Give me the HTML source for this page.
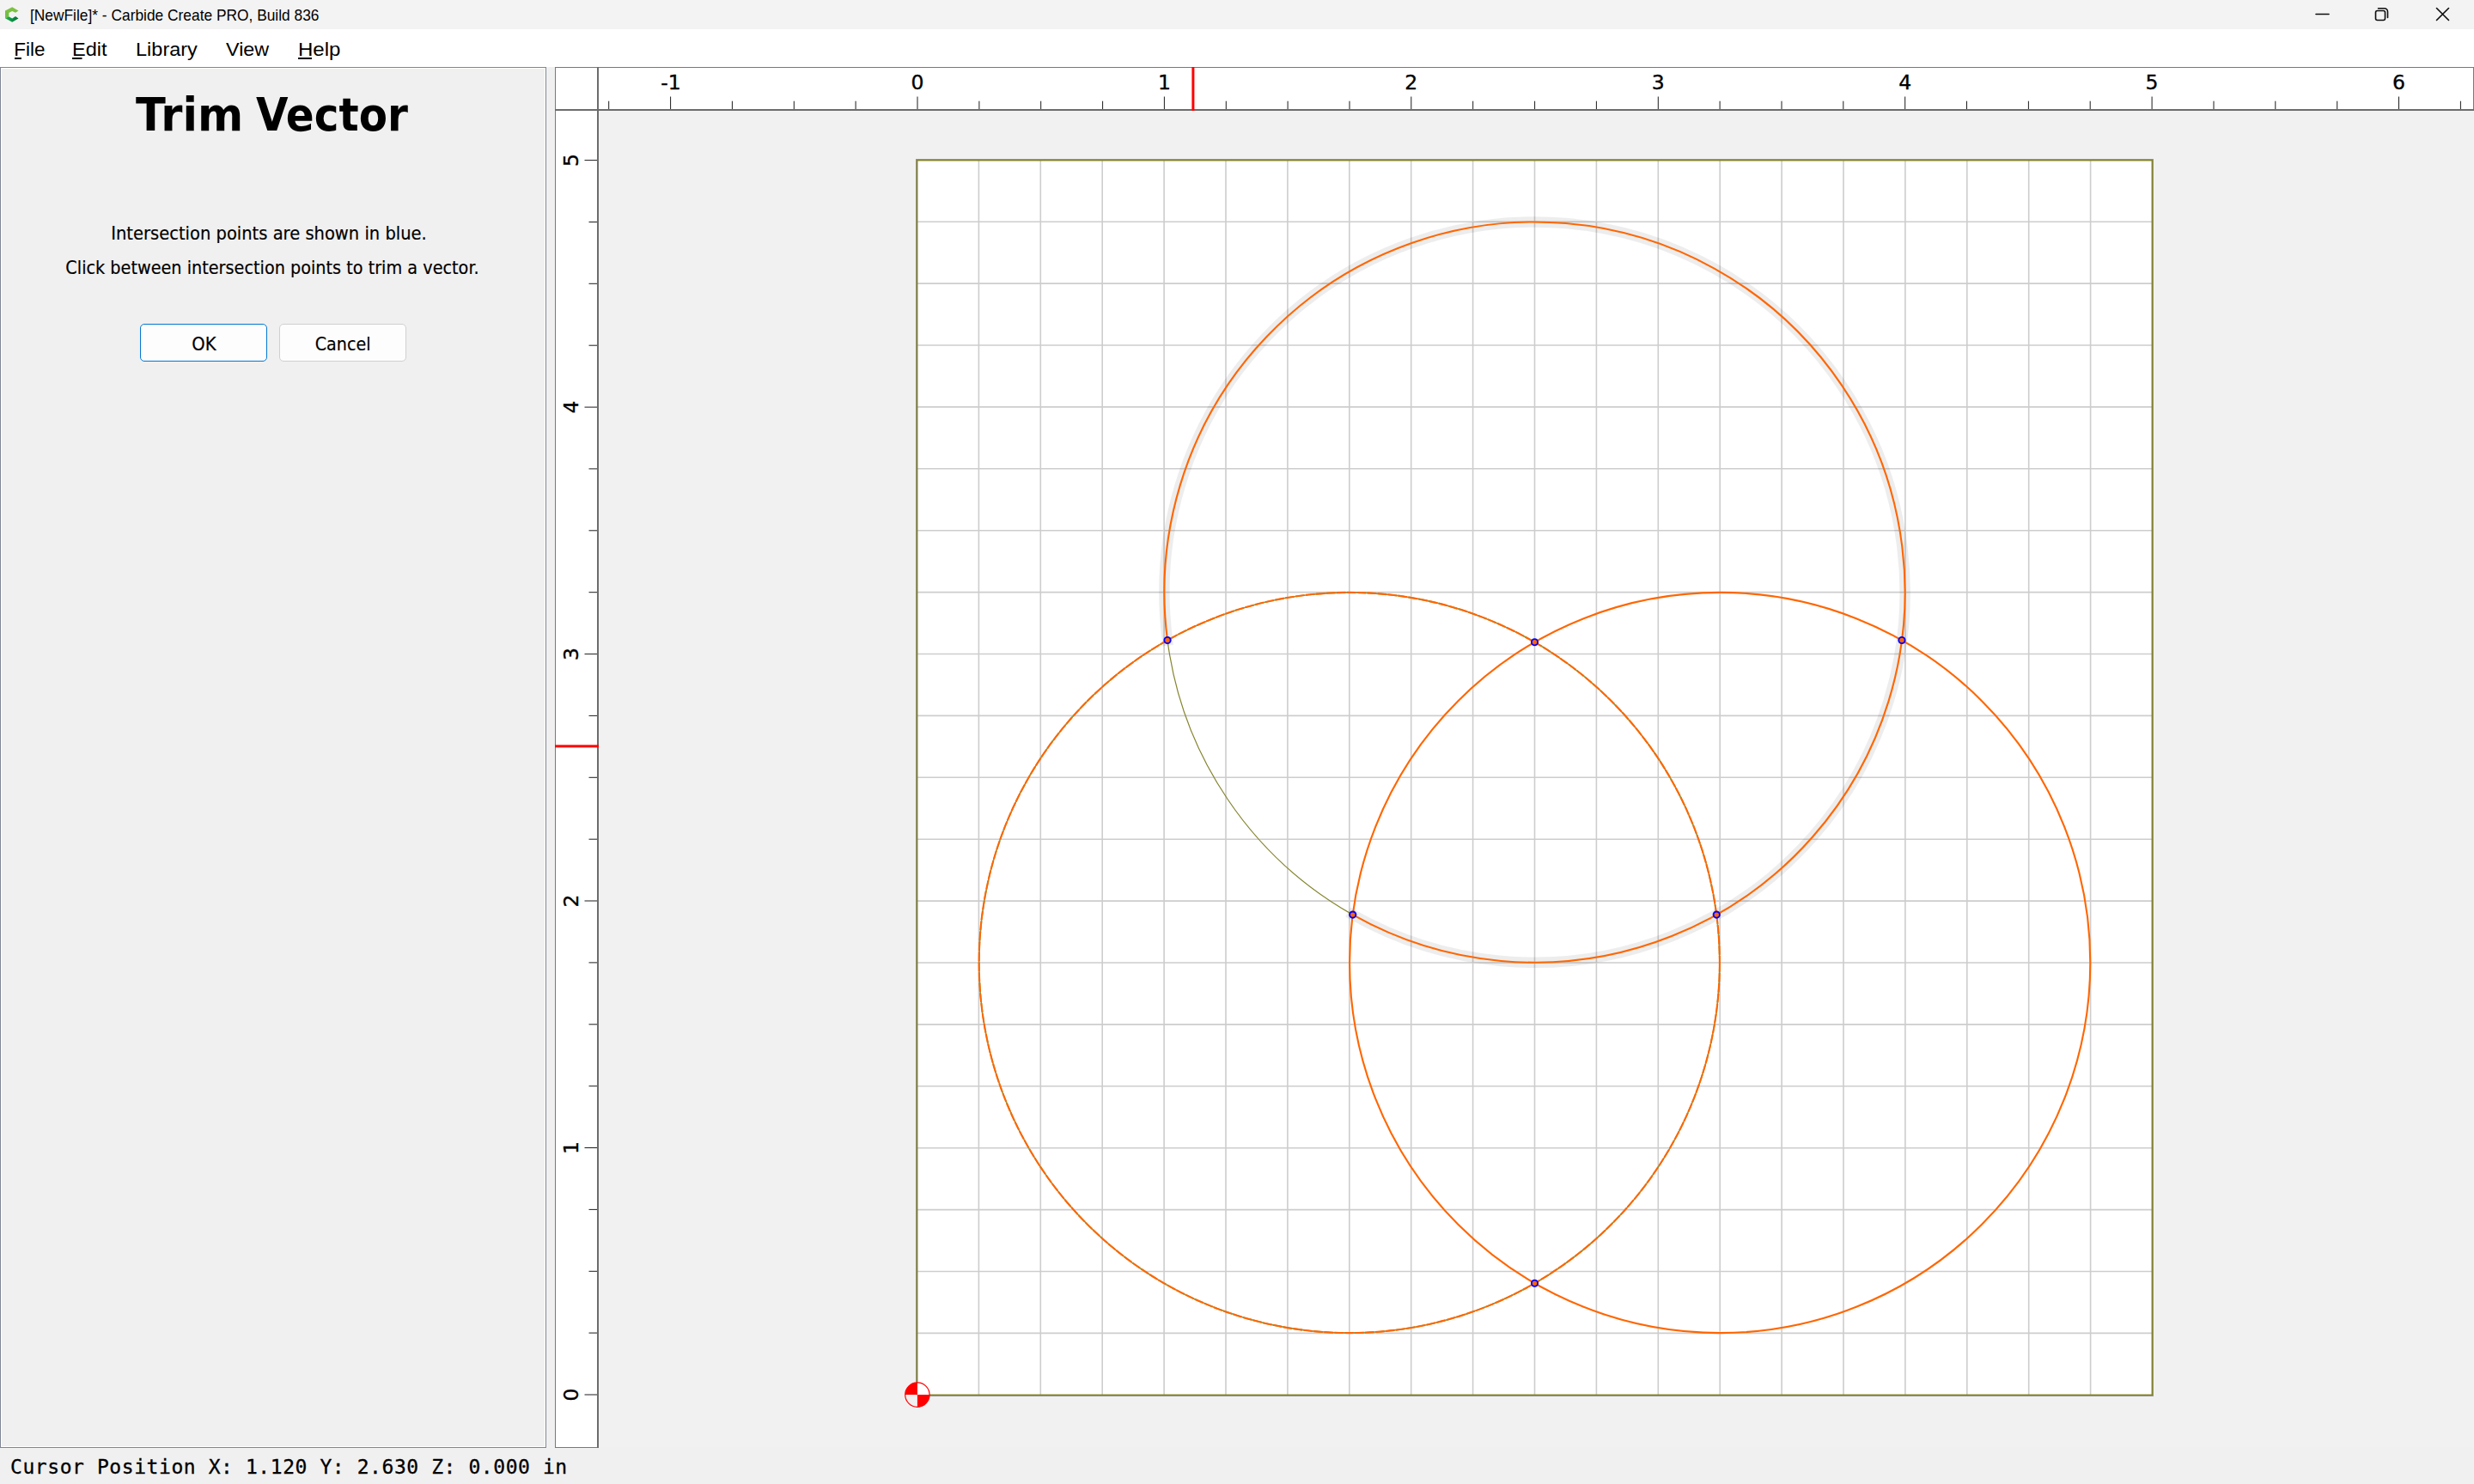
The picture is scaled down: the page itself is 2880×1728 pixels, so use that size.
<!DOCTYPE html>
<html lang="en"><head><meta charset="utf-8"><title>[NewFile]* - Carbide Create PRO, Build 836</title>
<style>
html,body{margin:0;padding:0;}
body{width:2880px;height:1728px;overflow:hidden;background:#f0f0f0;position:relative;font-family:"Liberation Sans",sans-serif;color:#000;}
.abs{position:absolute;white-space:nowrap;}
#titlebar{position:absolute;left:0;top:0;width:2880px;height:34px;background:#f3f3f3;}
#titletext{left:35px;top:4.7px;font-size:19px;line-height:26px;transform-origin:0 0;transform:scaleX(0.913);color:#000;}
#menubar{position:absolute;left:0;top:34px;width:2880px;height:44px;background:#fff;}
.mi{top:5.5px;font-size:22.5px;line-height:36px;transform-origin:0 0;}
.mi u{text-decoration:none;}
.mi.m::after{content:"";position:absolute;left:0.3px;top:27.8px;width:var(--w);height:1.7px;background:#000;}
#panel{position:absolute;left:0;top:78px;width:634px;height:1606px;border:1px solid #7e8594;background:#f0f0f0;box-shadow:inset 0 0 0 1px #fff;}
.tah{font-family:"DejaVu Sans",sans-serif;transform-origin:50% 50%;}
#ptitle{left:0;width:634px;top:23.3px;height:64px;font-size:53.33px;font-weight:bold;line-height:64px;}
#ptitle span{position:absolute;top:0;transform-origin:0 50%;}
.pline{-webkit-text-stroke:0.2px #000;left:0;width:634px;text-align:center;font-size:21.33px;line-height:30px;transform:scaleX(0.905);}
.btn{position:absolute;top:377px;width:146px;height:42px;border:1px solid #d0d0d0;border-radius:5px;background:#fdfdfd;text-align:center;}
.btn span{-webkit-text-stroke:0.2px #000;display:inline-block;position:relative;top:1.5px;font-family:"DejaVu Sans",sans-serif;font-size:21.33px;line-height:42px;transform:scaleX(0.92);}
#status{left:12px;top:1690.3px;-webkit-text-stroke:0.3px #000;font-family:"DejaVu Sans Mono","Liberation Mono",monospace;font-size:23px;letter-spacing:0.57px;line-height:36px;}
#cv{position:absolute;left:0;top:0;}
</style></head><body>

<div id="titlebar">
<svg class="abs" style="left:0;top:0" width="34" height="34" viewBox="0 0 34 34"><defs><linearGradient id="g1" x1="0" y1="0" x2="1" y2="0"><stop offset="0" stop-color="#2fae4c"/><stop offset="0.45" stop-color="#0a9648"/><stop offset="1" stop-color="#04702f"/></linearGradient></defs><polygon points="14.2,8.2 21.5,12.5 18,14.8 14.2,12.9 10.2,15.1 10.2,19.2 6,21.2 6,12.6" fill="#7bc142"/><polygon points="6,21.2 10.2,19.2 14.2,21.4 18,19.1 21.5,21.4 14.2,25.8" fill="url(#g1)"/><polygon points="6,12.6 10.2,15.1 10.2,19.2 6,21.2" fill="#72bf44"/></svg>
<div class="abs" id="titletext">[NewFile]* - Carbide Create PRO, Build 836</div>
<svg class="abs" style="left:2680px;top:0" width="200" height="34" viewBox="2680 0 200 34" fill="none" stroke="#0c0c0c" stroke-width="1.6" stroke-linecap="round"><path d="M2696 16.5H2711"/><rect x="2765.5" y="12.5" width="11" height="11" rx="2"/><path d="M2768.5 9.7H2775.5a4 4 0 0 1 4 4V20.5"/><path d="M2836.5 9.5L2850.5 23.5M2850.5 9.5L2836.5 23.5"/></svg>
</div>
<div id="menubar">
<div class="abs mi m" style="--w:8.8px;left:16.3px;transform:scaleX(1.0)"><u>F</u>ile</div>
<div class="abs mi m" style="--w:11.2px;left:84.4px;transform:scaleX(1.047)"><u>E</u>dit</div>
<div class="abs mi" style="left:157.5px;transform:scaleX(1.045)">Library</div>
<div class="abs mi" style="left:262.8px;transform:scaleX(1.037)">View</div>
<div class="abs mi m" style="--w:14.3px;left:346.5px;transform:scaleX(1.069)"><u>H</u>elp</div>
</div>
<div id="panel">
<div class="abs tah" id="ptitle"><span style="left:157px;transform:scaleX(0.958)">Trim</span> <span style="left:296.5px;transform:scaleX(0.909)">Vector</span></div>
<div class="abs tah pline" style="top:177.5px;left:-5.3px;transform:scaleX(0.915)">Intersection points are shown in blue.</div>
<div class="abs tah pline" style="top:217.5px;left:-0.8px;transform:scaleX(0.9025)">Click between intersection points to trim a vector.</div>
</div>
<div class="btn" style="left:163px;border-color:#0078d4"><span>OK</span></div>
<div class="btn" style="left:325px"><span style="transform:scaleX(0.897)">Cancel</span></div>
<div class="abs" id="status">Cursor Position X: 1.120 Y: 2.630 Z: 0.000 in</div>
<svg id="cv" width="2880" height="1728" viewBox="0 0 2880 1728" font-family="DejaVu Sans, sans-serif" font-size="23.5">
<rect x="697" y="129" width="2183" height="1556.6" fill="#f1f1f1"/>
<rect x="1066.5" y="185.5" width="1440" height="1440" fill="none" stroke="#9a9aa2" stroke-width="1"/>
<rect x="1067.5" y="186.3" width="1438.0" height="1438.0" fill="#fff"/>
<path d="M1139.4 186.3V1624.3M1067.5 1552.4H2505.5M1211.3 186.3V1624.3M1067.5 1480.5H2505.5M1283.2 186.3V1624.3M1067.5 1408.6H2505.5M1355.1 186.3V1624.3M1067.5 1336.7H2505.5M1427.0 186.3V1624.3M1067.5 1264.8H2505.5M1498.9 186.3V1624.3M1067.5 1192.9H2505.5M1570.8 186.3V1624.3M1067.5 1121.0H2505.5M1642.7 186.3V1624.3M1067.5 1049.1H2505.5M1714.6 186.3V1624.3M1067.5 977.2H2505.5M1786.5 186.3V1624.3M1067.5 905.3H2505.5M1858.4 186.3V1624.3M1067.5 833.4H2505.5M1930.3 186.3V1624.3M1067.5 761.5H2505.5M2002.2 186.3V1624.3M1067.5 689.6H2505.5M2074.1 186.3V1624.3M1067.5 617.7H2505.5M2146.0 186.3V1624.3M1067.5 545.8H2505.5M2217.9 186.3V1624.3M1067.5 473.9H2505.5M2289.8 186.3V1624.3M1067.5 402.0H2505.5M2361.7 186.3V1624.3M1067.5 330.1H2505.5M2433.6 186.3V1624.3M1067.5 258.2H2505.5" stroke="#cdcdcd" stroke-width="1.6" fill="none"/>
<rect x="1067.6" y="186.6" width="1437.8" height="1437.8" fill="none" stroke="#83832a" stroke-width="1.7"/>
<path d="M1359.04 745.49A431.10 431.10 0 1 1 1574.74 1065.11" fill="none" stroke="#000" stroke-opacity="0.07" stroke-width="12.5" stroke-linecap="square"/>
<path d="M1359.04 745.49A431.10 431.10 0 0 0 1574.74 1065.11" fill="none" stroke="#85852f" stroke-width="1.2"/>
<circle cx="1570.80" cy="1121.00" r="431.10" fill="none" stroke="#8a9a40" stroke-width="1.6"/>
<circle cx="1570.80" cy="1121.00" r="431.10" fill="none" stroke="#ff6600" stroke-width="2.1" stroke-dasharray="10.6 1.4"/>
<circle cx="2002.20" cy="1121.00" r="431.10" fill="none" stroke="#ff6600" stroke-width="2.1"/>
<path d="M1359.04 745.49A431.10 431.10 0 1 1 1574.74 1065.11" fill="none" stroke="#ff6600" stroke-width="2.1"/>
<circle cx="1359.04" cy="745.49" r="3.65" fill="#ff6600" stroke="#0000ff" stroke-width="1.9"/>
<circle cx="1998.26" cy="1065.11" r="3.65" fill="#ff6600" stroke="#0000ff" stroke-width="1.9"/>
<circle cx="1574.74" cy="1065.11" r="3.65" fill="#ff6600" stroke="#0000ff" stroke-width="1.9"/>
<circle cx="2213.96" cy="745.49" r="3.65" fill="#ff6600" stroke="#0000ff" stroke-width="1.9"/>
<circle cx="1786.50" cy="1494.26" r="3.65" fill="#ff6600" stroke="#0000ff" stroke-width="1.9"/>
<circle cx="1786.50" cy="747.74" r="3.65" fill="#ff6600" stroke="#0000ff" stroke-width="1.9"/>
<path d="M1067.9 1624.1V1609.8999999999999A14.2 14.2 0 0 1 1082.1000000000001 1624.1Z" fill="#fff"/>
<path d="M1067.9 1624.1V1638.3A14.2 14.2 0 0 1 1053.7 1624.1Z" fill="#f1f1f1"/>
<path d="M1067.9 1624.1V1609.8999999999999A14.2 14.2 0 0 0 1053.7 1624.1ZM1067.9 1624.1V1638.3A14.2 14.2 0 0 0 1082.1000000000001 1624.1Z" fill="#ff0000"/>
<circle cx="1067.9" cy="1624.1" r="14.2" fill="none" stroke="#ff0000" stroke-width="1.2"/>
<rect x="646" y="78" width="2234" height="50" fill="#fff"/>
<rect x="646" y="78" width="50" height="1608" fill="#fff"/>
<path d="M708.7 117.7V128M780.6 112.5V128M852.4 117.7V128M924.3 117.7V128M996.1 117.7V128M1068.0 112.5V128M1139.9 117.7V128M1211.7 117.7V128M1283.6 117.7V128M1355.4 112.5V128M1427.3 117.7V128M1499.1 117.7V128M1571.0 117.7V128M1642.8 112.5V128M1714.7 117.7V128M1786.6 117.7V128M1858.4 117.7V128M1930.3 112.5V128M2002.1 117.7V128M2074.0 117.7V128M2145.8 117.7V128M2217.7 112.5V128M2289.5 117.7V128M2361.4 117.7V128M2433.2 117.7V128M2505.1 112.5V128M2577.0 117.7V128M2648.8 117.7V128M2720.7 117.7V128M2792.5 112.5V128M2864.4 117.7V128" stroke="#1c1c1c" stroke-width="1" fill="none"/>
<path d="M680.5 1624.0H696M685.5 1552.1H696M685.5 1480.3H696M685.5 1408.4H696M680.5 1336.5H696M685.5 1264.7H696M685.5 1192.8H696M685.5 1120.9H696M680.5 1049.0H696M685.5 977.2H696M685.5 905.3H696M685.5 833.4H696M680.5 761.6H696M685.5 689.7H696M685.5 617.8H696M685.5 545.9H696M680.5 474.1H696M685.5 402.2H696M685.5 330.3H696M685.5 258.5H696M680.5 186.6H696" stroke="#1c1c1c" stroke-width="1" fill="none"/>
<text x="780.9" y="104.3" text-anchor="middle" stroke="#000" stroke-width="0.35">-1</text>
<text x="1068.0" y="104.3" text-anchor="middle" stroke="#000" stroke-width="0.35">0</text>
<text x="1355.4" y="104.3" text-anchor="middle" stroke="#000" stroke-width="0.35">1</text>
<text x="1642.8" y="104.3" text-anchor="middle" stroke="#000" stroke-width="0.35">2</text>
<text x="1930.3" y="104.3" text-anchor="middle" stroke="#000" stroke-width="0.35">3</text>
<text x="2217.7" y="104.3" text-anchor="middle" stroke="#000" stroke-width="0.35">4</text>
<text x="2505.1" y="104.3" text-anchor="middle" stroke="#000" stroke-width="0.35">5</text>
<text x="2792.5" y="104.3" text-anchor="middle" stroke="#000" stroke-width="0.35">6</text>
<text transform="translate(673.2 1624.0) rotate(-90)" text-anchor="middle" stroke="#000" stroke-width="0.35">0</text>
<text transform="translate(673.2 1336.5) rotate(-90)" text-anchor="middle" stroke="#000" stroke-width="0.35">1</text>
<text transform="translate(673.2 1049.0) rotate(-90)" text-anchor="middle" stroke="#000" stroke-width="0.35">2</text>
<text transform="translate(673.2 761.6) rotate(-90)" text-anchor="middle" stroke="#000" stroke-width="0.35">3</text>
<text transform="translate(673.2 474.1) rotate(-90)" text-anchor="middle" stroke="#000" stroke-width="0.35">4</text>
<text transform="translate(673.2 186.6) rotate(-90)" text-anchor="middle" stroke="#000" stroke-width="0.35">5</text>
<path d="M646 78.5H2880M646.5 78V1686M646 1685.5H697M2879.5 78V128" stroke="#787878" stroke-width="1" fill="none"/>
<path d="M646 128H2880M696 78V1686" stroke="#6c6c6c" stroke-width="2" fill="none"/>
<rect x="1387.4" y="78" width="3" height="51" fill="#ff0000"/>
<rect x="646" y="867.4" width="51" height="3" fill="#ff0000"/>
</svg>
</body></html>
